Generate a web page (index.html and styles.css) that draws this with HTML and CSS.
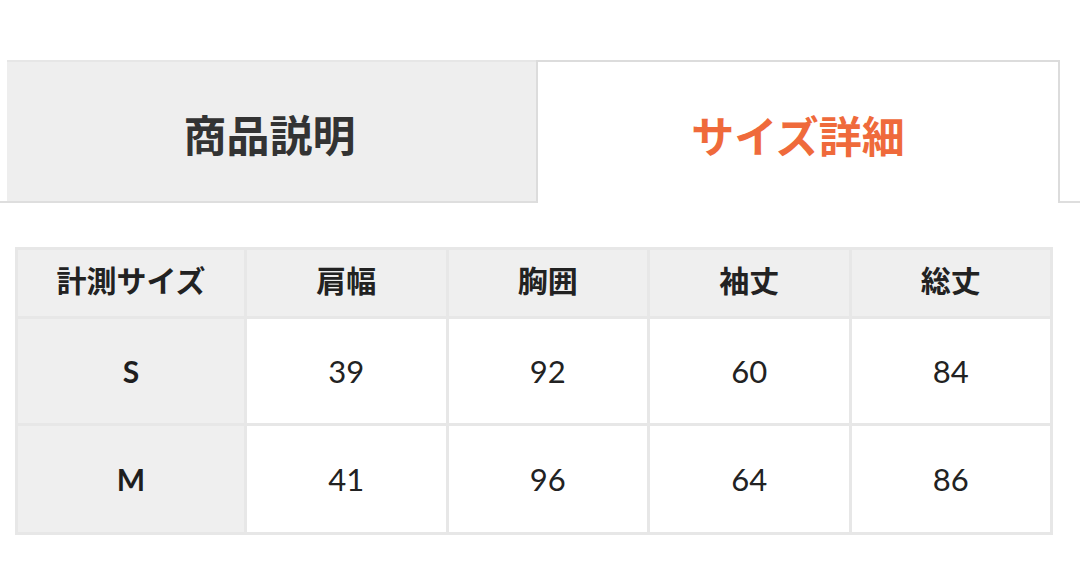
FILE: index.html
```html
<!DOCTYPE html>
<html lang="ja">
<head>
<meta charset="utf-8">
<title>サイズ詳細</title>
<link rel="stylesheet" href="styles.css">
</head>
<body>
<div class="tabs">
  <div class="tab-spacer left"></div>
  <div class="tab">商品説明</div>
  <div class="tab active">サイズ詳細</div>
  <div class="tab-spacer right"></div>
</div>
<div class="table-wrap">
  <table class="size-table">
    <colgroup>
      <col class="c-first">
      <col><col><col><col>
    </colgroup>
    <thead>
      <tr>
        <th>計測サイズ</th><th>肩幅</th><th>胸囲</th><th>袖丈</th><th>総丈</th>
      </tr>
    </thead>
    <tbody>
      <tr class="r1">
        <th class="size">S</th><td>39</td><td>92</td><td>60</td><td>84</td>
      </tr>
      <tr class="r2">
        <th class="size">M</th><td>41</td><td>96</td><td>64</td><td>86</td>
      </tr>
    </tbody>
  </table>
</div>
</body>
</html>
```

FILE: styles.css
```css
html, body {
  margin: 0;
  padding: 0;
  background: #ffffff;
}
body {
  width: 1080px;
  font-family: "Noto Sans CJK JP", "Noto Sans", sans-serif;
  color: #222;
}
.tabs {
  display: flex;
  padding-top: 60px;
  height: 203px;
  box-sizing: border-box;
}
.tab-spacer {
  border-bottom: 2px solid #dedede;
}
.tab-spacer.left { width: 7px; }
.tab-spacer.right { flex: 1; }
.tab {
  box-sizing: border-box;
  height: 100%;
  display: flex;
  align-items: center;
  justify-content: center;
  font-weight: 700;
  font-size: 43px;
  line-height: 1;
  padding-top: 3px;
}
.tab:not(.active) {
  width: 529px;
  background: #eeeeee;
  color: #333333;
  border-top: 2px solid #e6e6e6;
  border-bottom: 2px solid #dedede;
  padding-right: 4px;
}
.tab.active {
  width: 524px;
  background: #ffffff;
  color: #ef6a3b;
  border: 2px solid #dcdcdc;
  border-bottom: none;
}
.table-wrap {
  padding: 44px 0 0 15px;
}
.size-table {
  width: 1038px;
  table-layout: fixed;
  border-collapse: collapse;
  border: 3px solid #e7e7e7;
}
.size-table col.c-first { width: 229px; }
.size-table th,
.size-table td {
  border: 3px solid #e7e7e7;
  text-align: center;
  padding: 0;
}
.size-table thead th {
  height: 58px;
  background: #efefef;
  font-size: 30px;
  font-weight: 700;
  color: #222;
  padding-bottom: 8px;
}
.size-table tbody th.size {
  background: #efefef;
  font-family: "Lato", "Noto Sans", sans-serif;
  font-weight: 700;
  font-size: 30px;
  color: #1e1e1e;
}
.size-table tbody td {
  background: #ffffff;
  font-family: "Lato", "Noto Sans", sans-serif;
  font-size: 31px;
  color: #222;
}
.size-table tr.r1 th, .size-table tr.r1 td { height: 104px; }
.size-table tr.r2 th, .size-table tr.r2 td { height: 106px; }
```
